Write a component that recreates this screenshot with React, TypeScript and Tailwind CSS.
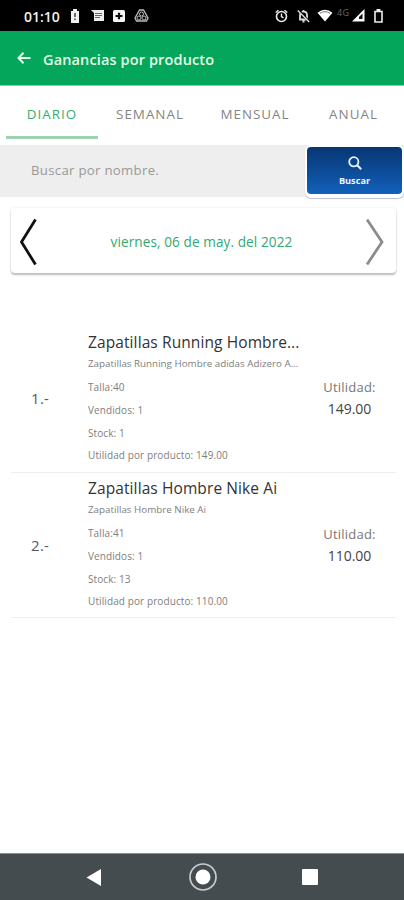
import type { ReactNode } from "react";

type Product = {
  n: string;
  name: string;
  desc: string;
  lines: string[];
  total: string;
};

const products: Product[] = [
  {
    n: "1.-",
    name: "Zapatillas Running Hombre...",
    desc: "Zapatillas Running Hombre adidas Adizero A...",
    lines: ["Talla:40", "Vendidos: 1", "Stock: 1", "Utilidad por producto: 149.00"],
    total: "149.00",
  },
  {
    n: "2.-",
    name: "Zapatillas Hombre Nike Ai",
    desc: "Zapatillas Hombre Nike Ai",
    lines: ["Talla:41", "Vendidos: 1", "Stock: 13", "Utilidad por producto: 110.00"],
    total: "110.00",
  },
];

function Icon({ w, h = 16, className = "", children }: { w: number; h?: number; className?: string; children: ReactNode }) {
  return (
    <svg width={w} height={h} viewBox={`0 0 ${w} ${h}`} fill="none" className={`block shrink-0 ${className}`}>
      {children}
    </svg>
  );
}

function StatusBar() {
  return (
    <div className="flex h-[31px] items-center bg-black pl-6 text-[#f0f0f0]">
      <span className="w-[47px] text-[14px] leading-[31px] font-semibold whitespace-nowrap pt-[1px]">01:10</span>
      <Icon w={8} h={14}>
        <path d="M0 2h2V0h4v2h2v12H0z" fill="#f0f0f0" />
        <path d="M4 4v4M4 9.5V11" stroke="#222" strokeWidth="1.3" />
      </Icon>
      <Icon w={13} h={12} className="ml-3">
        <path d="M0 0h13v11H3V3z" fill="#eee" />
        <path d="M4 3.500h7M4 5.500h7M4 7.500h5" stroke="#444" strokeWidth=".8" />
      </Icon>
      <Icon w={12} h={12} className="ml-[9px]">
        <rect width="12" height="12" rx="1.5" fill="#f5f5f5" />
        <path d="M2.500 6h7M6 2.800v6.400" stroke="#111" strokeWidth="2.200" />
      </Icon>
      <Icon w={15} h={13} className="ml-[9px]">
        <path d="M5.5 1h4L14 9l-1.5 3h-10L1 9z" stroke="#bbb" strokeWidth="1.3" />
        <circle cx="7.5" cy="5" r="2" stroke="#bbb" />
        <circle cx="5" cy="9" r="2" stroke="#bbb" />
        <circle cx="10" cy="9" r="2" stroke="#bbb" />
      </Icon>
      <Icon w={13} h={14} className="ml-[126px]">
        <circle cx="6.5" cy="7.5" r="5" stroke="#eee" strokeWidth="1.6" />
        <path d="M6.5 4.5v3.2l2 1.2M.7 3.5l2.8-2.3M12.3 3.5L9.500 1.200" stroke="#eee" strokeWidth="1.4" />
      </Icon>
      <Icon w={13} h={14} className="ml-[9px]">
        <path d="M3 10.500V6c0-4.500 7-4.500 7 0v4.500zM6.500 1v2M5.500 12.500h2" stroke="#ddd" strokeWidth="1.800" />
        <path d="M1.800 1l10.400 12" stroke="#000" strokeWidth="2.200" />
        <path d="M.8 1.500l11.400 11.500" stroke="#ddd" strokeWidth="1.400" />
      </Icon>
      <Icon w={16} h={13} className="ml-[7px]">
        <path d="M.5 3.800Q8-2.200 15.500 3.800L8 12.500z" fill="#fff" />
        <path d="M3 4.300Q8 1 13 4.300" stroke="#555" strokeWidth=".8" />
      </Icon>
      <span className="ml-[4px] w-[15px] text-[9px] leading-3 -mt-[6px] text-[#686868] tracking-[0.3px]">4G</span>
      <Icon w={13} h={13}>
        <path d="M12.500 0v12.500H0z" fill="#fff" />
        <path d="M10.500 4.500v5.500H7V8z" fill="#111" />
      </Icon>
      <Icon w={9} h={14} className="ml-[9px]">
        <path d="M1 2.500h7v10.500H1z" stroke="#eee" strokeWidth="1.600" />
        <path d="M2.500 1h4" stroke="#eee" strokeWidth="2" />
      </Icon>
    </div>
  );
}

function ProductRow({ p, className, sideClass }: { p: Product; className: string; sideClass: string }) {
  return (
    <div className={`mr-2 ml-[11px] flex border-b border-[#efefef] ${className}`}>
      <div className={`flex w-[77px] items-center pl-5 text-[15px] tracking-[0.3px] text-[#5a5a5a] ${sideClass}`}>{p.n}</div>
      <div className="w-[220px] whitespace-nowrap text-[#7e7e7e]">
        <div className="pt-[5px] text-[15.5px] leading-5 tracking-[0.1px] text-[#333]">{p.name}</div>
        <div className="pt-[5px] text-[9.8px] leading-[14px]">{p.desc}</div>
        <div className="pt-[5px] text-[10px] leading-[22.8px] tracking-[0.1px]">
          {p.lines.map((l) => (
            <div key={l}>{l}</div>
          ))}
        </div>
      </div>
      <div className={`flex w-[83px] flex-col items-center justify-center leading-[21px] ${sideClass}`}>
        <span className="text-[13px] tracking-[0.2px] text-[#777]">Utilidad:</span>
        <span className="text-[14px] text-[#444]">{p.total}</span>
      </div>
    </div>
  );
}

export default function App() {
  return (
    <div className="flex h-[900px] w-[404px] flex-col overflow-hidden bg-white font-['Open_Sans','Noto_Sans',sans-serif]">
      <StatusBar />
      <header className="flex h-[55px] shrink-0 items-center border-b border-[#85d2ab] bg-[#03a65a] pl-[17px] text-[#e4fbe9]">
        <Icon w={14} h={14} className="-mt-[1px]">
          <path d="M13.500 7H1.500M6.500 1.800L1.500 7l5 5.200" stroke="#e4fbe9" strokeWidth="2" />
        </Icon>
        <h1 className="ml-3 pt-[4px] text-[14.5px] leading-5 font-semibold tracking-[0.13px] whitespace-nowrap">Ganancias por producto</h1>
      </header>
      <nav className="flex h-[59px] shrink-0 text-[13.4px] leading-[57px] tracking-[1px] text-[#858585]">
        <div className="ml-[6px] flex h-[53px] w-[92px] justify-center border-b-[3px] border-[#9fd2b5] text-[#35ad72]">DIARIO</div>
        <div className="w-[104px] text-center">SEMANAL</div>
        <div className="w-[106px] text-center">MENSUAL</div>
        <div className="w-[91px] text-center">ANUAL</div>
      </nav>
      <div className="flex h-[52px] shrink-0 bg-[#eee]">
        <div className="w-[305px] pl-[31px] text-[13.2px] leading-[51px] tracking-[0.3px] text-[#999]">Buscar por nombre.</div>
        <button className="h-[53px] w-[99px] rounded-md border-2 border-white bg-white pb-[2px] shadow-[0_1px_1px_#bdbdcd]">
          <span className="flex h-full flex-col items-center rounded-[4px] bg-linear-to-b from-[#083674] to-[#1261bb] pt-[9px] text-[#eef5ff]">
            <Icon w={14} h={14}>
              <circle cx="5.800" cy="5.800" r="4.600" stroke="#e8f2ff" strokeWidth="1.800" />
              <path d="M9.200 9.200l4 4" stroke="#e8f2ff" strokeWidth="2" />
            </Icon>
            <span className="mt-[5px] text-[9.2px] leading-3 font-bold">Buscar</span>
          </span>
        </button>
      </div>
      <section className="mt-[11px] mr-2 ml-[11px] flex h-[65px] shrink-0 items-center justify-between rounded-[4px] bg-white pt-[2px] pr-2 pl-[9px] shadow-[0_2px_2px_#bcbcbc,0_0_2px_#e0e0e0]">
        <Icon w={17} h={48}>
          <path d="M15.500 1.500L1.500 24l14 22.500" stroke="#111" strokeWidth="2.800" />
        </Icon>
        <span className="pt-[2px] text-[13.6px] tracking-[0.08px] text-[#35a96f]">viernes, 06 de may. del 2022</span>
        <Icon w={22} h={48}>
          <path d="M1 1.500L16 24L1 46.500" stroke="#8c8c8c" strokeWidth="2.800" />
        </Icon>
      </section>
      <main className="mt-[54px] flex-1">
        <ProductRow p={products[0]} className="h-[146px]" sideClass="pb-[3px]" />
        <ProductRow p={products[1]} className="h-[145px]" sideClass="" />
      </main>
      <footer className="flex h-[47px] shrink-0 items-center border-t border-[#888d90] bg-[#454c50]">
        <Icon w={15} h={17} className="ml-[86px]">
          <path d="M15 0v17L.5 8.500z" fill="#fff" />
        </Icon>
        <Icon w={28} h={28} className="ml-[88px]">
          <circle cx="14" cy="14" r="13" stroke="#c7cccd" strokeWidth="1.700" />
          <circle cx="14" cy="14" r="7.500" fill="#fff" />
        </Icon>
        <Icon w={16} h={16} className="ml-[85px]">
          <rect width="16" height="16" rx="1" fill="#fff" />
        </Icon>
      </footer>
    </div>
  );
}
